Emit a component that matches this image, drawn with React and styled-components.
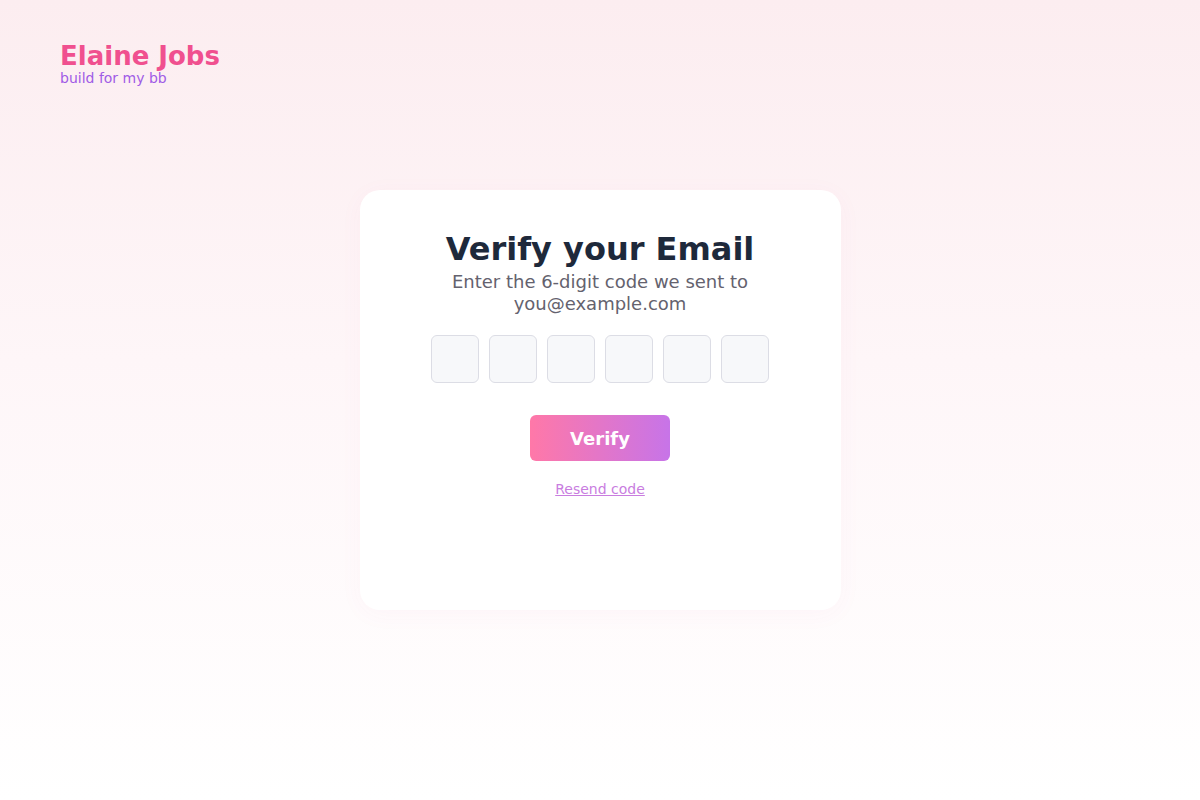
import React, { useRef, useState } from "react";
import styled, { createGlobalStyle } from "styled-components";

const GlobalStyle = createGlobalStyle`
  html, body {
    margin: 0;
    padding: 0;
  }
  body {
    font-family: "DejaVu Sans", "Liberation Sans", sans-serif;
  }
  * {
    box-sizing: border-box;
  }
`;

const Page = styled.div`
  display: grid;
  grid-template: 1fr / 1fr;
  min-height: 100vh;
  background: linear-gradient(to bottom, #fcedf0 0%, #fef6f8 45%, #ffffff 100%);
`;

const Header = styled.header`
  grid-area: 1 / 1;
  align-self: start;
  justify-self: start;
  padding: 40px 60px;
  display: flex;
  flex-direction: column;
`;

const Brand = styled.div`
  font-size: 26px;
  font-weight: 700;
  color: #f0508f;
  line-height: 32px;
`;

const Tagline = styled.div`
  font-size: 14px;
  color: #a05be6;
  line-height: 16px;
  margin-top: -2px;
`;

const Card = styled.main`
  grid-area: 1 / 1;
  align-self: center;
  justify-self: center;
  width: 481px;
  height: 420px;
  background: #ffffff;
  border-radius: 20px;
  box-shadow: 0 4px 24px rgba(236, 72, 153, 0.04);
  padding: 39px 48px;
  display: flex;
  flex-direction: column;
  align-items: center;
  text-align: center;
`;

const Title = styled.h1`
  margin: 0;
  font-size: 32px;
  font-weight: 700;
  line-height: 40px;
  color: #1e293b;
`;

const Subtitle = styled.p`
  margin: 2px 0 0;
  max-width: 320px;
  font-size: 18px;
  line-height: 22px;
  color: #64626e;
`;

const CodeRow = styled.div`
  display: flex;
  gap: 10px;
  margin-top: 20px;
`;

const CodeBox = styled.input`
  width: 48px;
  height: 48px;
  border: 1px solid #dcdde5;
  border-radius: 6px;
  background: #f7f8fa;
  text-align: center;
  font-family: inherit;
  font-size: 22px;
  color: #1e293b;
  outline: none;
  &:focus {
    border-color: #e879b9;
  }
`;

const VerifyButton = styled.button`
  margin-top: 32px;
  width: 140px;
  height: 46px;
  border: none;
  border-radius: 6px;
  background: linear-gradient(to right, #ff78a8, #c774e8);
  color: #ffffff;
  font-family: inherit;
  font-size: 18px;
  font-weight: 700;
  cursor: pointer;
`;

const ResendLink = styled.a`
  margin-top: 20px;
  font-size: 14px;
  line-height: 16px;
  color: #c97ddf;
  text-decoration: underline;
  text-underline-offset: 1px;
  cursor: pointer;
`;

export default function App() {
  const [digits, setDigits] = useState(["", "", "", "", "", ""]);
  const refs = useRef([]);

  const onChange = (i, value) => {
    const v = value.replace(/\D/g, "").slice(-1);
    const next = [...digits];
    next[i] = v;
    setDigits(next);
    if (v && refs.current[i + 1]) refs.current[i + 1].focus();
  };

  return (
    <>
      <GlobalStyle />
      <Page>
        <Header>
          <Brand>Elaine Jobs</Brand>
          <Tagline>build for my bb</Tagline>
        </Header>
        <Card>
          <Title>Verify your Email</Title>
          <Subtitle>Enter the 6-digit code we sent to you@example.com</Subtitle>
          <CodeRow>
            {digits.map((d, i) => (
              <CodeBox
                key={i}
                ref={(el) => (refs.current[i] = el)}
                value={d}
                inputMode="numeric"
                maxLength={1}
                onChange={(e) => onChange(i, e.target.value)}
              />
            ))}
          </CodeRow>
          <VerifyButton>Verify</VerifyButton>
          <ResendLink>Resend code</ResendLink>
        </Card>
      </Page>
    </>
  );
}
